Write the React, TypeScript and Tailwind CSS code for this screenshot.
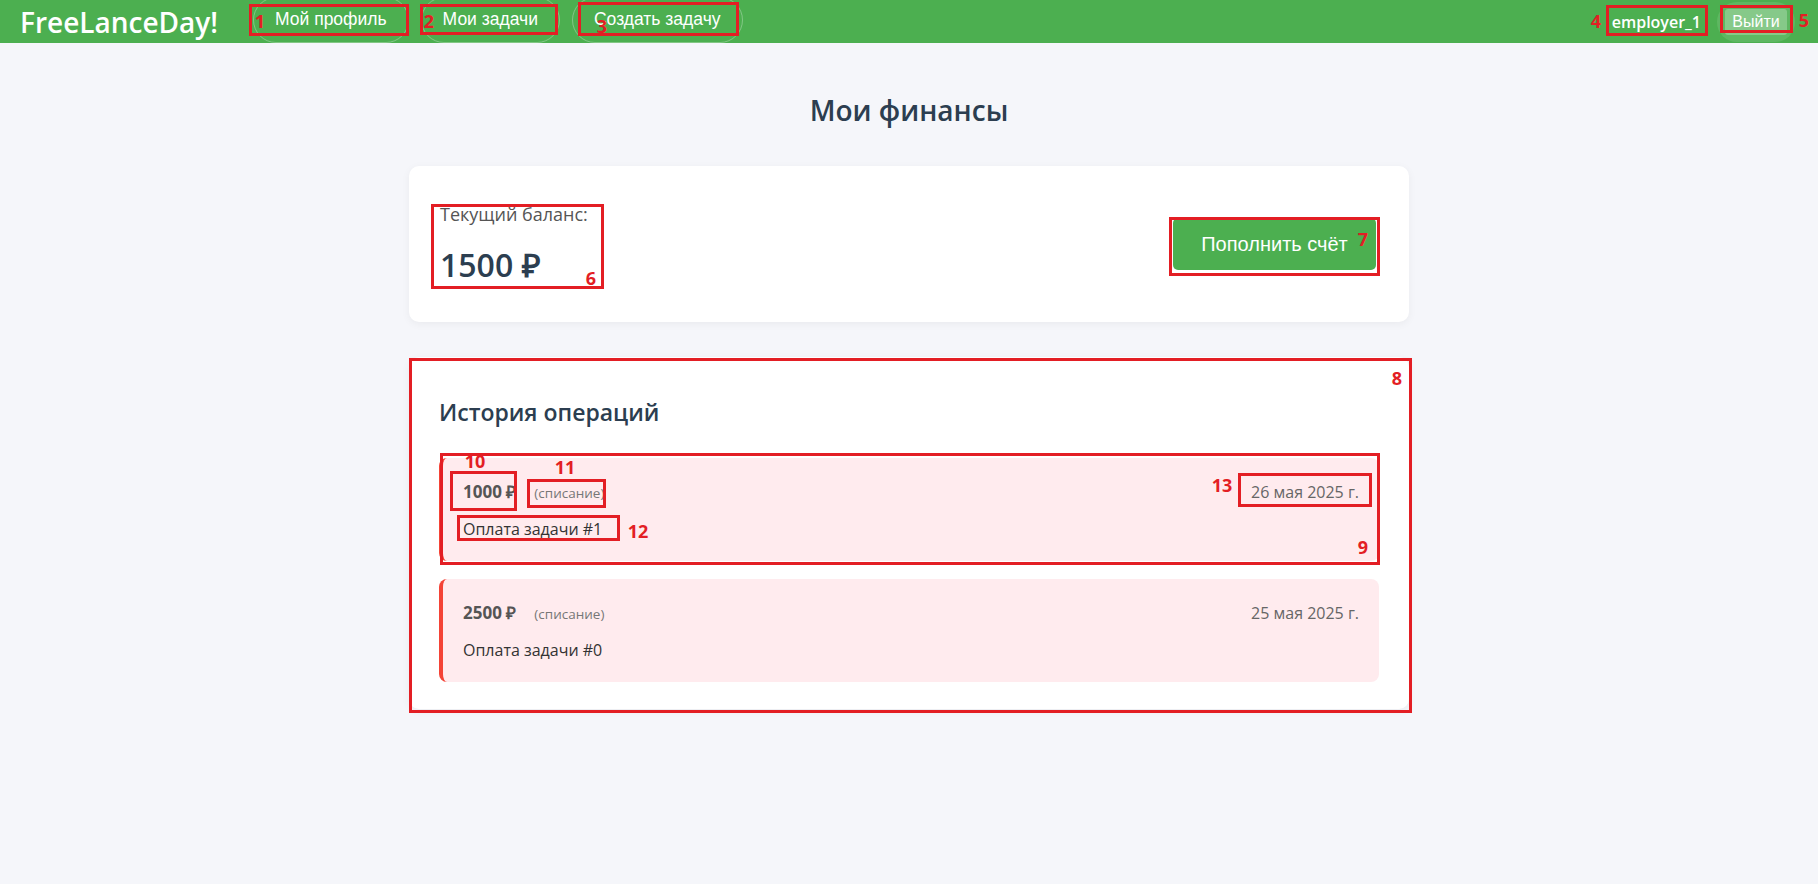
import * as React from 'react';

interface Operation {
    amount: number;
    type: string;
    date: string;
    description: string;
}

const operations: Operation[] = [
    { amount: 1000, type: 'списание', date: '26 мая 2025 г.', description: 'Оплата задачи #1' },
    { amount: 2500, type: 'списание', date: '25 мая 2025 г.', description: 'Оплата задачи #0' },
];

/* red review marks laid over the page: [left, top, width, height] */
const marks: [number, number, number, number][] = [
    [249, 4, 160, 32],
    [420, 4, 138, 31],
    [578, 2, 161, 34],
    [1606, 5, 102, 31],
    [1720, 5, 73, 28],
    [431, 204, 173, 85],
    [1169, 217, 211, 59],
    [409, 358, 1003, 355],
    [440, 453, 940, 112],
    [450, 471, 67, 40],
    [527, 479, 79, 29],
    [457, 515, 163, 26],
    [1238, 473, 134, 34],
];

/* label centres */
const labels: [string, number, number][] = [
    ['1', 260, 21],
    ['2', 429, 21],
    ['3', 602, 26],
    ['4', 1596, 21],
    ['5', 1804, 20],
    ['6', 591, 278],
    ['7', 1363, 239],
    ['8', 1397, 378],
    ['9', 1363, 547],
    ['10', 475, 461],
    ['11', 565, 467],
    ['12', 638, 531],
    ['13', 1222, 485],
];

function NavLink({ children }: { children: React.ReactNode }) {
    return (
        <a className="flex h-[46px] -translate-y-[2px] items-center rounded-full border border-white/30 px-[21px] font-['Liberation_Sans',Arial,sans-serif] text-[17.5px] text-white">
            {children}
        </a>
    );
}

export default function App() {
    return (
        <div className="relative min-h-screen bg-[#f5f6fa] font-['Open_Sans',sans-serif]">
            <header className="flex h-[43px] items-center overflow-hidden bg-[#4caf50] pl-5 pr-[23px]">
                <span className="text-[28px] font-semibold text-white">
                    FreeLanceDay!
                </span>

                <nav className="ml-[35px] flex items-center gap-[12px]">
                    <NavLink>Мой профиль</NavLink>
                    <NavLink>Мои задачи</NavLink>
                    <NavLink>Создать задачу</NavLink>
                </nav>

                <div className="ml-auto flex items-center gap-[16px]">
                    <span className="text-[16px] font-semibold text-white">
                        employer_1
                    </span>

                    <div className="flex h-[40px] w-[78px] items-center justify-center rounded-full bg-white/10">
                        <button className="rounded-[3px] bg-white/25 px-[7px] py-[1px] font-['Liberation_Sans',Arial,sans-serif] text-[16px] text-white">
                            Выйти
                        </button>
                    </div>
                </div>
            </header>

            <main className="pt-[49px]">
                <h1 className="text-center text-[28px] font-semibold leading-[36px] text-[#2c3e50]">
                    Мои финансы
                </h1>

                <div className="mx-auto mt-[38px] w-[1000px]">
                    <section className="flex h-[156px] items-center justify-between rounded-[10px] bg-white pl-[31px] pr-[33px] shadow-[0_2px_8px_rgba(0,0,0,0.05)]">
                        <div className="flex flex-col pb-[2px]">
                            <span className="text-[18px] leading-[26px] text-[#555]">
                                Текущий баланс:
                            </span>

                            <span className="mt-[18px] text-[32px] font-semibold leading-[40px] text-[#2c3e50]">
                                1500 ₽
                            </span>
                        </div>

                        <button className="flex h-[52px] w-[203px] items-center justify-center rounded-[5px] bg-[#4caf50] font-['Liberation_Sans',Arial,sans-serif] text-[20px] text-white">
                            Пополнить счёт
                        </button>
                    </section>

                    <section className="mt-[35px] rounded-[10px] bg-white px-[30px] pb-[27px] pt-[40px] shadow-[0_2px_8px_rgba(0,0,0,0.05)]">
                        <h3 className="text-[23px] font-semibold leading-[30px] text-[#2c3e50]">
                            История операций
                        </h3>

                        <div className="mt-[31px] flex flex-col gap-[18px]">
                            {operations.map((op) => (
                                <div
                                    key={op.description}
                                    className="rounded-[8px] border-l-4 border-[#f44336] bg-[#ffebee] pb-[20px] pl-5 pr-5 pt-[22px]"
                                >
                                    <div className="flex items-center justify-between">
                                        <div className="flex items-baseline">
                                            <span className="text-[17px] font-bold leading-[24px] text-[#555]">
                                                {op.amount} ₽
                                            </span>

                                            <span className="ml-[18px] text-[13.5px] text-[#777]">
                                                ({op.type})
                                            </span>
                                        </div>

                                        <span className="text-[16px] text-[#666]">
                                            {op.date}
                                        </span>
                                    </div>

                                    <p className="mt-[13px] text-[16px] leading-[24px] text-[#333]">
                                        {op.description}
                                    </p>
                                </div>
                            ))}
                        </div>
                    </section>
                </div>
            </main>

            <div className="pointer-events-none absolute inset-0">
                {marks.map(([x, y, w, h]) => (
                    <div
                        key={`${x}-${y}`}
                        className="absolute border-[3px] border-[#e31e24]"
                        style={{ left: x, top: y, width: w, height: h }}
                    />
                ))}

                {labels.map(([text, x, y]) => (
                    <span
                        key={text}
                        className="absolute -translate-x-1/2 -translate-y-1/2 text-[18px] font-bold leading-none text-[#e31e24]"
                        style={{ left: x, top: y }}
                    >
                        {text}
                    </span>
                ))}
            </div>
        </div>
    );
}
